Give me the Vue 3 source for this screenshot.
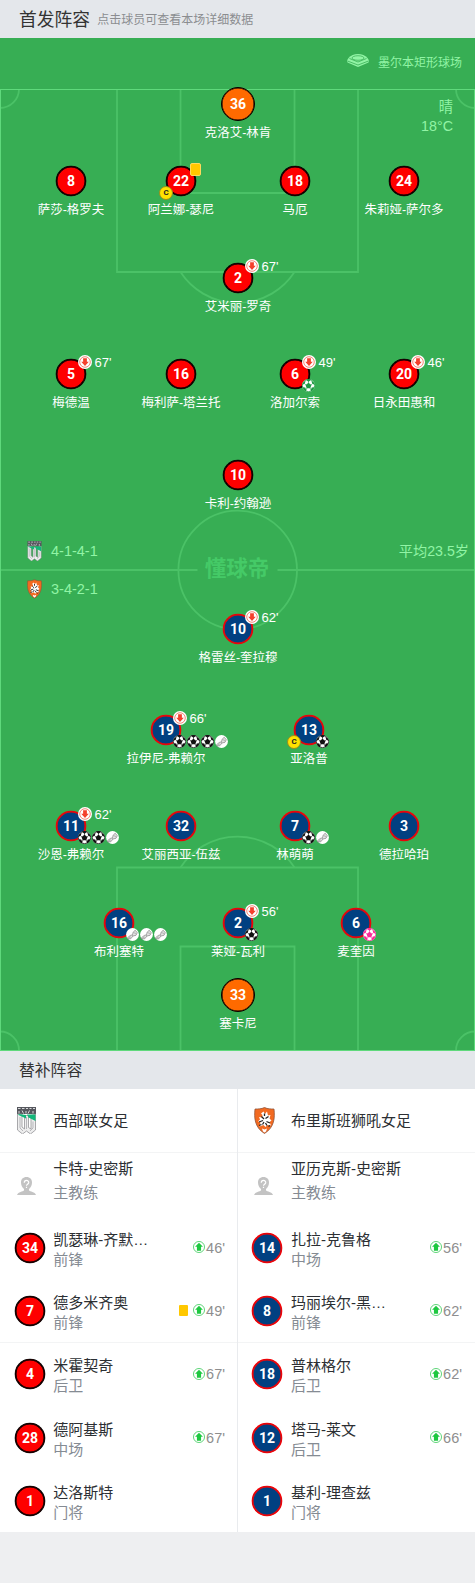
<template>
  <div class="page">
    <!-- 共用图标 -->
    <svg class="sprite" aria-hidden="true">
      <symbol id="ball" viewBox="0 0 26 26">
        <circle cx="13" cy="13" r="13" fill="#fff" />
        <circle cx="13" cy="13" r="12.2" fill="none" stroke="currentColor" stroke-width="1.6" />
        <path
          fill="currentColor"
          d="M13 7.6l5.800 4.200-2.200 6.700H9.400l-2.200-6.700zM7.500 1.500L13 5.400l5.500-3.900A12.500 12.500 0 0 0 7.500 1.500zM.5 11.500l5-2 1.700-6A12.500 12.500 0 0 0 .5 11.500zM25.500 11.500l-5-2-1.700-6A12.500 12.500 0 0 1 25.500 11.500zM1 16.500l5.500.5 2.500 6-1.500 1.500A12.500 12.500 0 0 1 1 16.500zM25 16.500l-5.500.5-2.500 6 1.500 1.500A12.500 12.500 0 0 0 25 16.500z"
        />
        <path
          fill="none"
          stroke="currentColor"
          stroke-width="1.2"
          d="M13 8V4M8 12L5 9.500M18 12l3-2.500M10 17.800L8 22M16 17.800l2 4.200"
        />
      </symbol>
      <symbol id="boot" viewBox="0 0 26 26">
        <circle cx="13" cy="13" r="12.800" fill="#fff" />
        <path
          fill="#e4e4e4"
          stroke="#777"
          stroke-width="1.300"
          stroke-linejoin="round"
          d="M14.500 8l4-3.500 4 5-2.500 5-6 1.500-4.500 5.500-6 .5-.5-2.500 5.500-4.500 4.500-1.500z"
        />
        <path fill="none" stroke="#888" stroke-width="1.100" d="M12 14l2 2M5 20.500l5-3M16 9.500l4 1.500" />
      </symbol>
      <symbol id="sub-out" viewBox="0 0 26 26">
        <circle cx="13" cy="13" r="13" fill="#fff" />
        <circle cx="13" cy="13" r="9.800" fill="none" stroke="#f0513c" stroke-width="1.300" />
        <path fill="#f4402c" d="M9.500 6h7v6.500h3.500L13 20.500 6 12.500h3.500z" />
      </symbol>
      <symbol id="sub-in" viewBox="0 0 26 26">
        <circle cx="13" cy="13" r="12" fill="#fff" stroke="#2cc84d" stroke-width="1.600" />
        <path fill="#1ec840" d="M13 4l8.500 8.500h-4V21h-9v-8.500h-4z" />
      </symbol>
      <symbol id="coach" viewBox="0 0 38 36">
        <path
          fill="#c3c3c3"
          d="M19 0c7 0 11 4.500 11 11 0 6-2.500 10-6 13v3c2 2 12 2.500 14 9H0c2-6.500 12-7 14-9v-3c-3.500-3-6-7-6-13C8 4.500 12 0 19 0z"
        />
        <path
          fill="none"
          stroke="#fff"
          stroke-width="2.400"
          d="M14.500 11.500c0-6 9-6 9-.500 0 3.500-4.500 3.500-4.500 6.500M19 19.500v2.500"
        />
      </symbol>
      <symbol id="western" viewBox="0 0 38 54">
        <path fill="#55575d" d="M0 0h38v14H0z" />
        <path
          fill="none"
          stroke="#d8d8da"
          stroke-width="2"
          d="M2 3h5M10 3h5M18 3h4M25 3h4M32 3h4M4 8v5M10 7l3 6M18 8v5M25 7l-3 6M32 8v5"
        />
        <path
          fill="#eee"
          stroke="#8d8d91"
          stroke-width="1.500"
          d="M1 14h9v26l5 4V17h8v24l5 3V17l9-3v32l-10 8-8-6-8 6L1 46z"
        />
        <path fill="#13b77a" d="M3 14l15 2v7L3 16zM20 15h17v13l-14-7z" />
        <path fill="none" stroke="#b7b7bb" stroke-width="2" d="M6 20v22l6 6M19 20v24M32 29v13l-6 6" />
      </symbol>
      <symbol id="roar" viewBox="0 0 42 54">
        <path
          fill="#f26a21"
          stroke="#8c5138"
          stroke-width="1.500"
          d="M21 1c6 3 13 3 19 3 2 17 1 37-19 49C1 41 0 21 2 4c6 0 13 0 19-3z"
        />
        <path
          fill="#fff"
          d="M19 9l3 5 4-5 2 8 5-1-2 7 4 4-4 3 3 7-7-1-4 4-4-4-8 3 2-8-5-2 4-4-2-5 6 1 1-5-3-3z"
        />
        <path
          fill="none"
          stroke="#222"
          stroke-width="2.600"
          d="M15 19l5 5M29 19l-6 4M10 30l8-3M25 29l7 3M17 35l3-5M26 37l-3-5M10 37l5-2M32 37l-3 2M21 13v5"
        />
        <path fill="#fff" d="M16 43l5 2 5-2-2 6-3 2-3-2z" />
      </symbol>
    </svg>

    <header class="section-head">
      <h2 class="section-title">首发阵容</h2>
      <span class="section-tip">点击球员可查看本场详细数据</span>
    </header>

    <section class="pitch">
      <svg class="lines" viewBox="0 0 475 1013" fill="none">
        <g stroke="#4bc267" stroke-width="1.800">
          <path d="M117 51v183h241V51M180.500 51v104h114V51" />
          <path d="M180.500 234a68 68 0 0 0 114 0" />
          <path d="M117 1012V829.500h241V1012M180.500 1012V908.500h114V1012" />
          <path d="M180.500 829.500a68 68 0 0 1 114 0" />
          <circle cx="237.700" cy="532" r="59.300" />
          <path d="M0 532h197.500M277.500 532H475" />
          <path d="M0 70a19 19 0 0 0 19-19M475 70a19 19 0 0 1-19-19M0 993.500a19 19 0 0 1 19 19M475 993.500a19 19 0 0 0-19 19" />
        </g>
        <rect x=".5" y="51.500" width="474" height="961" stroke="#5fd97c" />
      </svg>

      <div class="venue">
        <svg class="venue-icon" viewBox="0 0 44 26">
          <path fill="#91f4a5" d="M22 0c8 0 14 3 19 8l3 5-1 4-21 9L1 17l-1-4 3-5C8 3 14 0 22 0z" />
          <path fill="none" stroke="#37ae54" stroke-width="1.600" d="M1 14l21 8 21-8M5 9l17 7 17-7" />
          <ellipse cx="22" cy="8" rx="12" ry="4.500" fill="none" stroke="#37ae54" stroke-width="1.500" />
        </svg>
        <span>墨尔本矩形球场</span>
      </div>
      <div class="weather">
        <div>晴</div>
        <div>18°C</div>
      </div>
      <div class="formation home">
        <svg class="formation-logo"><use href="#western" /></svg>
        <span>4-1-4-1</span>
      </div>
      <div class="formation away">
        <svg class="formation-logo"><use href="#roar" /></svg>
        <span>3-4-2-1</span>
      </div>
      <div class="age">平均23.5岁</div>
      <div class="watermark">懂球帝</div>

      <div class="lineup">
        <div v-for="(row, i) in rows" :key="i" class="row" :class="'cols-' + row.players.length">
          <div v-for="p in row.players" :key="p.name" class="player" :class="{ keeper: p.keeper }">
            <div class="shirt" :class="[row.side, { keeper: p.keeper }]">
              {{ p.num }}
              <span v-if="p.card" class="card"></span>
              <span v-if="p.captain" class="captain">C</span>
              <span v-if="p.out" class="out">
                <svg class="badge"><use href="#sub-out" /></svg>{{ p.out }}'
              </span>
              <span v-if="p.events" class="events">
                <svg v-for="(e, j) in p.events" :key="j" class="badge" :class="e">
                  <use :href="e === 'boot' ? '#boot' : '#ball'" />
                </svg>
              </span>
            </div>
            <div class="name">{{ p.name }}</div>
          </div>
        </div>
      </div>
    </section>

    <header class="section-head">
      <h2 class="section-title small">替补阵容</h2>
    </header>

    <section class="bench">
      <div v-for="team in bench" :key="team.name" class="team" :class="team.side">
        <div class="bench-row team-row line">
          <div class="avatar">
            <svg :class="team.logo"><use :href="'#' + team.logo" /></svg>
          </div>
          <div class="bench-name">{{ team.name }}</div>
        </div>
        <div class="bench-row coach-row">
          <div class="avatar">
            <svg class="coach"><use href="#coach" /></svg>
          </div>
          <div class="info">
            <div class="bench-name">{{ team.coach }}</div>
            <div class="role">主教练</div>
          </div>
        </div>
        <div v-for="(p, i) in team.players" :key="p.num" class="bench-row" :class="{ line: i === 1 }">
          <div class="shirt" :class="team.side">{{ p.num }}</div>
          <div class="info">
            <div class="bench-name">{{ p.name }}</div>
            <div class="role">{{ p.role }}</div>
          </div>
          <div v-if="p.on" class="on">
            <span v-if="p.card" class="bench-card"></span>
            <svg class="on-icon"><use href="#sub-in" /></svg>
            <span class="on-time">{{ p.on }}'</span>
          </div>
        </div>
      </div>
    </section>
  </div>
</template>

<script setup>
const rows = [
  { side: 'home', players: [{ num: 36, name: '克洛艾-林肯', keeper: true }] },
  {
    side: 'home',
    players: [
      { num: 8, name: '萨莎-格罗夫' },
      { num: 22, name: '阿兰娜-瑟尼', card: true, captain: true },
      { num: 18, name: '马厄' },
      { num: 24, name: '朱莉娅-萨尔多' },
    ],
  },
  { side: 'home', players: [{ num: 2, name: '艾米丽-罗奇', out: 67 }] },
  {
    side: 'home',
    players: [
      { num: 5, name: '梅德温', out: 67 },
      { num: 16, name: '梅利萨-塔兰托' },
      { num: 6, name: '洛加尔索', out: 49, events: ['penalty'] },
      { num: 20, name: '日永田惠和', out: 46 },
    ],
  },
  { side: 'home', players: [{ num: 10, name: '卡利-约翰逊' }] },
  { side: 'away', players: [{ num: 10, name: '格雷丝-奎拉穆', out: 62 }] },
  {
    side: 'away',
    players: [
      { num: 19, name: '拉伊尼-弗赖尔', out: 66, events: ['goal', 'goal', 'goal', 'boot'] },
      { num: 13, name: '亚洛普', captain: true, events: ['goal'] },
    ],
  },
  {
    side: 'away',
    players: [
      { num: 11, name: '沙恩-弗赖尔', out: 62, events: ['goal', 'goal', 'boot'] },
      { num: 32, name: '艾丽西亚-伍兹' },
      { num: 7, name: '林萌萌', events: ['goal', 'boot'] },
      { num: 3, name: '德拉哈珀' },
    ],
  },
  {
    side: 'away',
    players: [
      { num: 16, name: '布利塞特', events: ['boot', 'boot', 'boot'] },
      { num: 2, name: '莱娅-瓦利', out: 56, events: ['goal'] },
      { num: 6, name: '麦奎因', events: ['own-goal'] },
    ],
  },
  { side: 'away', players: [{ num: 33, name: '塞卡尼', keeper: true }] },
]

const bench = [
  {
    side: 'home',
    logo: 'western',
    name: '西部联女足',
    coach: '卡特-史密斯',
    players: [
      { num: 34, name: '凯瑟琳-齐默…', role: '前锋', on: 46 },
      { num: 7, name: '德多米齐奥', role: '前锋', on: 49, card: true },
      { num: 4, name: '米霍契奇', role: '后卫', on: 67 },
      { num: 28, name: '德阿基斯', role: '中场', on: 67 },
      { num: 1, name: '达洛斯特', role: '门将' },
    ],
  },
  {
    side: 'away',
    logo: 'roar',
    name: '布里斯班狮吼女足',
    coach: '亚历克斯-史密斯',
    players: [
      { num: 14, name: '扎拉-克鲁格', role: '中场', on: 56 },
      { num: 8, name: '玛丽埃尔-黑…', role: '前锋', on: 62 },
      { num: 18, name: '普林格尔', role: '后卫', on: 62 },
      { num: 12, name: '塔马-莱文', role: '后卫', on: 66 },
      { num: 1, name: '基利-理查兹', role: '门将' },
    ],
  },
]
</script>

<style>
body {
  background: #eeeff1;
}
</style>

<style scoped>
.page {
  width: 475px;
  min-height: 1583px;
  background: #eeeff1;
  font-family: "Liberation Sans", "Noto Sans CJK SC", sans-serif;
  color: #2c2f33;
}

.sprite {
  position: absolute;
  width: 0;
  height: 0;
}

.section-head {
  display: flex;
  align-items: center;
  box-sizing: border-box;
  height: 38px;
  padding: 0 0 2px 19px;
  background: #e4e7eb;
}

.section-title {
  margin: 0;
  font-size: 17.800px;
  font-weight: 400;
  color: #333;
}

.section-title.small {
  font-size: 15.800px;
}

.section-tip {
  margin-left: 7px;
  font-size: 12px;
  color: #8b8d90;
}

/* 球场 */
.pitch {
  position: relative;
  height: 1013px;
  background: #37ae54;
  color: #91f4a5;
  font-size: 14.300px;
}

.lines {
  position: absolute;
  inset: 0;
  width: 475px;
  height: 1013px;
}

.venue {
  position: absolute;
  top: 15px;
  right: 13px;
  display: flex;
  align-items: center;
  gap: 9px;
  font-size: 12px;
  line-height: 20px;
}

.venue-icon {
  width: 22px;
  height: 13px;
  margin-bottom: 6px;
}

.weather {
  position: absolute;
  top: 60px;
  right: 22px;
  text-align: right;
  line-height: 19px;
}

.formation {
  position: absolute;
  left: 27px;
  display: flex;
  align-items: center;
  gap: 9px;
  height: 20px;
  line-height: 20px;
  font-size: 14.500px;
}

.formation.home {
  top: 503px;
}

.formation.away {
  top: 541px;
}

.formation-logo {
  width: 15px;
  height: 20px;
}

.age {
  position: absolute;
  top: 503px;
  right: 6px;
  line-height: 20px;
  font-size: 14.200px;
}

.watermark {
  position: absolute;
  top: 516px;
  left: 197px;
  width: 80px;
  text-align: center;
  line-height: 30px;
  font-size: 21.500px;
  font-weight: 700;
  color: #45ca67;
}

.lineup {
  position: relative;
  display: grid;
  grid-template-rows: 79px 97px 96px 101px 154px 101px 96px 97px 70px 73px;
  padding-top: 49px;
  color: #fff;
}

.row {
  display: grid;
  align-items: start;
}

.cols-1 {
  grid-template-columns: 476px;
}

.cols-2 {
  padding-left: 95px;
  grid-template-columns: 142px 144px;
}

.cols-3 {
  padding-left: 60px;
  grid-template-columns: 118px 120px 116px;
}

.cols-4 {
  padding-left: 16px;
  grid-template-columns: 110px 110px 118px 100px;
}

.player {
  display: flex;
  flex-direction: column;
  align-items: center;
  gap: 4px;
}

.player.keeper {
  gap: 2px;
}

.shirt {
  position: relative;
  flex: none;
  box-sizing: border-box;
  width: 30px;
  height: 30px;
  border: 1px solid #000;
  border-radius: 50%;
  text-align: center;
  line-height: 29px;
  font-family: Roboto, sans-serif;
  font-size: 14px;
  font-weight: 700;
  color: #fff;
}

.shirt.home {
  background: #fe0000;
  box-shadow: inset 0 0 0 0.5px #000, 0 0 0 0.3px #000;
}

.shirt.away {
  background: #014081;
  border-color: #fe0000;
  box-shadow: inset 0 0 0 0.5px #fe0000, 0 0 0 0.3px #fe0000;
}

.shirt.keeper {
  width: 34px;
  height: 34px;
  line-height: 32px;
  background: #ff6a00;
  border-color: #000;
  box-shadow: inset 0 0 0 0.5px #000;
}

.name {
  font-size: 12.500px;
  line-height: 20px;
  white-space: nowrap;
}

.badge {
  flex: none;
  width: 13px;
  height: 13px;
}

.card {
  position: absolute;
  top: -4px;
  left: 23px;
  width: 9px;
  height: 11px;
  border: 1px solid #ffd95e;
  border-radius: 2px;
  background: #ffc800;
}

.captain {
  position: absolute;
  top: 19px;
  left: -8px;
  box-sizing: border-box;
  width: 14px;
  height: 14px;
  border: 1px solid #9a8d1c;
  border-radius: 50%;
  background: #ffe100;
  color: #222;
  font-size: 8px;
  line-height: 12px;
}

.out {
  position: absolute;
  top: -5px;
  left: 21px;
  display: flex;
  align-items: center;
  gap: 2.500px;
  font-family: "Liberation Sans", sans-serif;
  font-size: 13px;
  font-weight: 400;
  line-height: 13px;
}

.out .badge {
  width: 14px;
  height: 14px;
}

.events {
  position: absolute;
  top: 19px;
  left: 21.300px;
  display: flex;
  gap: 1px;
}

.goal {
  color: #111;
}

.penalty {
  color: #1f9a43;
}

.own-goal {
  color: #f92a98;
}

/* 替补 */
.bench {
  display: grid;
  grid-template-columns: 238px 237px;
  background: #fff;
}

.team.home {
  border-right: 1px solid #e9ebee;
}

.bench-row {
  display: flex;
  align-items: center;
  box-sizing: border-box;
  height: 63.200px;
  padding: 0 12px 0 15px;
}

.team.away .bench-row {
  padding-right: 13px;
  padding-left: 14px;
}

.bench-row.line {
  border-bottom: 1px solid #f3f4f5;
}

.bench-row.team-row {
  height: 64.200px;
}

.avatar {
  display: flex;
  width: 30px;
  padding-left: 2px;
  box-sizing: border-box;
}

.western {
  width: 19px;
  height: 27px;
}

.roar {
  width: 21px;
  height: 27px;
}

.coach {
  width: 19px;
  height: 18px;
  margin-top: 2px;
}

.bench-row > .bench-name,
.info {
  margin-left: 8.300px;
}

.team.away .bench-row > .bench-name,
.team.away .info {
  margin-left: 9px;
}

.info {
  margin-top: 4px;
}

.bench-name,
.role {
  font-size: 15px;
  line-height: 20px;
  white-space: nowrap;
}

.role {
  color: #858b93;
}

.coach-row .info {
  margin-top: -8px;
}

.coach-row .bench-name {
  margin-bottom: 4px;
}

.on {
  display: flex;
  align-items: center;
  margin-left: auto;
  font-size: 14.500px;
  color: #8e8e8e;
}

.on-icon {
  width: 12px;
  height: 12px;
  margin-right: 1px;
  margin-bottom: 1px;
}

.on-time {
  line-height: 16px;
}

.bench-card {
  width: 9px;
  height: 11px;
  margin-right: 5px;
  margin-bottom: 1px;
  border-radius: 1px;
  background: #ffc800;
}
</style>
